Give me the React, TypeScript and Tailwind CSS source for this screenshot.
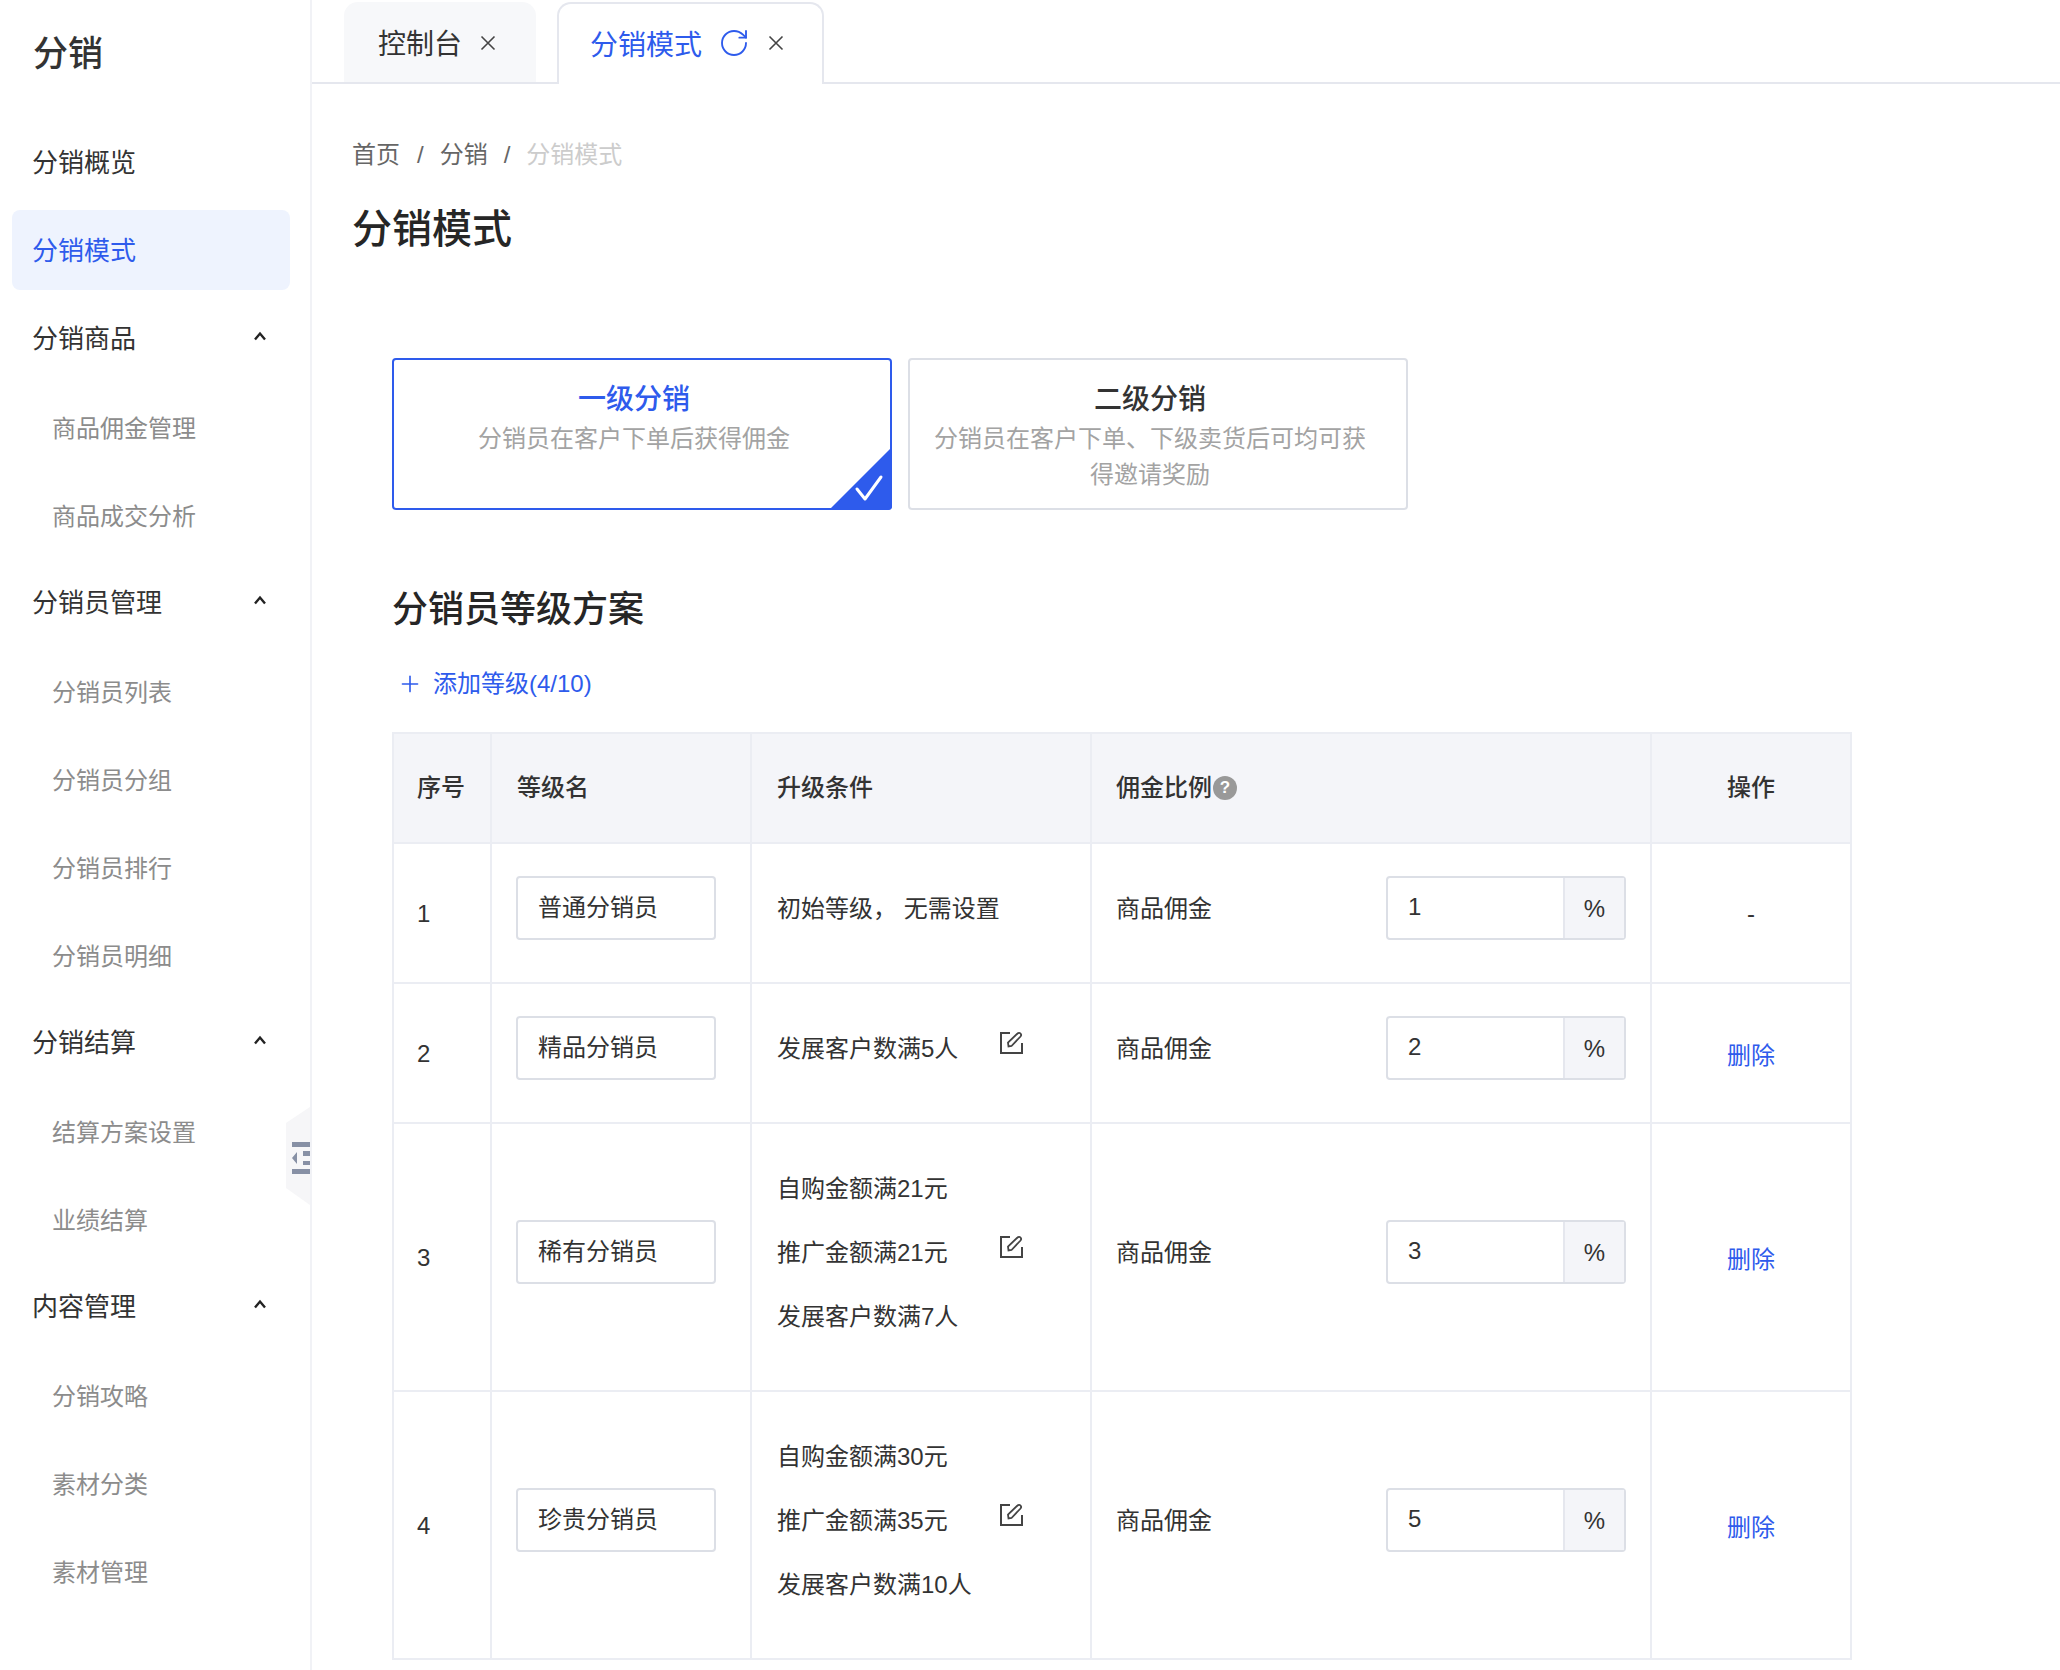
import React from 'react';
import { RotateCw, Plus } from 'lucide-react';

const groups = [
  { title: '分销商品', items: ['商品佣金管理', '商品成交分析'] },
  { title: '分销员管理', items: ['分销员列表', '分销员分组', '分销员排行', '分销员明细'] },
  { title: '分销结算', items: ['结算方案设置', '业绩结算'] },
  { title: '内容管理', items: ['分销攻略', '素材分类', '素材管理'] },
];

const levels = [
  { id: 1, name: '普通分销员', conditions: ['初始等级， 无需设置'], editable: false, rate: '1', height: 'h-[140px]' },
  { id: 2, name: '精品分销员', conditions: ['发展客户数满5人'], editable: true, rate: '2', height: 'h-[140px]' },
  { id: 3, name: '稀有分销员', conditions: ['自购金额满21元', '推广金额满21元', '发展客户数满7人'], editable: true, rate: '3', height: 'h-[268px]' },
  { id: 4, name: '珍贵分销员', conditions: ['自购金额满30元', '推广金额满35元', '发展客户数满10人'], editable: true, rate: '5', height: 'h-[268px]' },
];

const CloseIcon = () => (
  <svg width="16" height="16" viewBox="0 0 16 16" fill="none" stroke="#444" strokeWidth="1.6">
    <path d="M1.5 1.5 14.5 14.5M14.5 1.5 1.5 14.5" />
  </svg>
);

const EditIcon = () => (
  <svg width="24" height="24" viewBox="0 0 24 24" fill="none" stroke="#444" strokeWidth="2">
    <path d="M11 2H2v20h21v-10" />
    <path d="M9.5 15.5 9 11.5 18.5 2.5c1-1 2.2-.9 3 0s.9 2 0 3L12.5 15z" strokeWidth="1.8" />
  </svg>
);

const Chevron = () => (
  <svg width="14" height="10" viewBox="0 0 14 10" fill="none" stroke="#222" strokeWidth="2.4">
    <path d="M2 8.5 7 2.5l5 6" />
  </svg>
);

const Sidebar = () => (
  <aside className="relative w-[312px] shrink-0 border-r-2 border-[#f1f2f6]">
    <div className="h-[122px] pl-[33px] pt-[30px] text-[35px] leading-[48px] font-medium text-[#333]">分销</div>
    <nav className="px-[12px] text-[26px] text-[#333]">
      <div className="mb-[8px] flex h-[80px] items-center pl-[20px] pt-[2px]">分销概览</div>
      <div className="mb-[8px] flex h-[80px] w-[278px] items-center rounded-[8px] bg-[#eef3fe] pl-[20px] pt-[2px] text-[#2e5bec]">分销模式</div>
      {groups.map((group) => (
        <div key={group.title} className="mb-[6px]">
          <div className="flex h-[80px] items-center justify-between pl-[20px] pr-[31px] pt-[2px]">
            <span>{group.title}</span>
            <span className="-mt-[6px]"><Chevron /></span>
          </div>
          <div className="mt-[10px] flex flex-col gap-[8px]">
            {group.items.map((item) => (
              <div key={item} className="flex h-[80px] items-center pl-[40px] pt-[2px] text-[24px] text-[#8c8c8c]">{item}</div>
            ))}
          </div>
        </div>
      ))}
    </nav>
    <svg className="absolute right-[-2px] top-[1107px]" width="26" height="98" viewBox="1 0 26 98">
      <path d="M1 16 25 0v98L1 81z" fill="#f6f6f8" />
      <path d="M7 35h18v5H7zM18 44h7v5h-7zM18 54h7v4h-7zM7 62h18v5H7zM7 51l5-6v12z" fill="#8790a5" />
    </svg>
  </aside>
);

const TabBar = () => (
  <div className="flex h-[84px] items-end border-b-2 border-[#e5e7ee] pl-[32px]">
    <div className="flex h-[80px] w-[192px] items-center rounded-t-[14px] bg-[#f7f8fa] pl-[34px] pt-[2px] text-[28px] text-[#333]">
      <span className="pt-[3px]">控制台</span>
      <span className="ml-[18px]"><CloseIcon /></span>
    </div>
    <div className="-mb-[2px] ml-[21px] flex h-[82px] w-[267px] items-center rounded-t-[14px] border-2 border-b-0 border-[#e5e7ee] bg-white pb-[2px] pl-[31px] text-[28px] text-[#2e5bec]">
      <span className="pt-[5px]">分销模式</span>
      <RotateCw className="ml-[16px]" size={32} strokeWidth={1.4} />
      <span className="ml-[18px]"><CloseIcon /></span>
    </div>
  </div>
);

const ModeCard = ({ title, desc, active }: { title: string; desc: string; active?: boolean }) => (
  <div
    className={`relative h-[152px] w-[500px] rounded-[4px] border-2 pl-[24px] pr-[40px] pt-[21px] text-center ${
      active ? 'border-[#2e5bec]' : 'border-[#dcdfe6]'
    }`}
  >
    <div className={`text-[28px] font-medium leading-[38px] ${active ? 'text-[#2e5bec]' : 'text-[#333]'}`}>{title}</div>
    <div className="mt-[2px] text-[24px] leading-[36px] text-[#a3a3a3]">{desc}</div>
    {active && (
      <svg className="absolute bottom-[-2px] right-[-2px]" width="63" height="63" viewBox="0 0 63 63">
        <path d="M63 0v59a4 4 0 0 1-4 4H0z" fill="#2e5bec" />
        <path d="M28 42l8 10 16-22" fill="none" stroke="#fff" strokeWidth="3" strokeLinecap="round" strokeLinejoin="round" />
      </svg>
    )}
  </div>
);

const cellBase = 'border-2 border-[#ebedf3] align-middle';

const LevelTable = () => (
  <table className="w-[1458px] table-fixed border-collapse text-[24px] text-[#333]">
    <colgroup>
      <col className="w-[98px]" />
      <col className="w-[260px]" />
      <col className="w-[340px]" />
      <col className="w-[560px]" />
      <col className="w-[200px]" />
    </colgroup>
    <thead>
      <tr className="h-[110px] bg-[#f4f5f9] font-medium">
        <th className={`${cellBase} pb-[1px] pl-[23px] text-left font-medium`}>序号</th>
        <th className={`${cellBase} pb-[1px] pl-[25px] text-left font-medium`}>等级名</th>
        <th className={`${cellBase} pb-[1px] pl-[25px] text-left font-medium`}>升级条件</th>
        <th className={`${cellBase} pb-[1px] pl-[24px] text-left font-medium`}>
          <span className="flex items-center">
            佣金比例
            <span className="ml-[1px] flex h-[24px] w-[24px] items-center justify-center rounded-full bg-[#999] text-[17px] font-bold text-white">?</span>
          </span>
        </th>
        <th className={`${cellBase} pb-[1px] text-center font-medium`}>操作</th>
      </tr>
    </thead>
    <tbody>
      {levels.map((level) => (
        <tr key={level.id} className={level.height}>
          <td className={`${cellBase} pl-[23px] pt-[2px]`}>{level.id}</td>
          <td className={`${cellBase} pl-[24px]`}>
            <input
              readOnly
              value={level.name}
              className="mb-[11px] block h-[64px] w-[200px] rounded-[4px] border-2 border-[#dcdfe6] pb-[5px] pl-[20px] outline-none"
            />
          </td>
          <td className={`${cellBase} pl-[25px]`}>
            <div className="mb-[8px] flex items-center">
              <div className="w-[222px] whitespace-nowrap leading-[64px]">
                {level.conditions.map((line) => (
                  <div key={line}>{line}</div>
                ))}
              </div>
              {level.editable && (
                <span className="-mt-[12px]"><EditIcon /></span>
              )}
            </div>
          </td>
          <td className={`${cellBase} pl-[24px] pr-[24px]`}>
            <div className="mb-[11px] flex items-center justify-between">
              <span className="pt-[2px]">商品佣金</span>
              <div className="flex h-[64px] w-[240px] rounded-[4px] border-2 border-[#dcdfe6]">
                <input readOnly value={level.rate} className="w-[175px] min-w-0 pb-[2px] pl-[20px] outline-none" />
                <div className="flex flex-1 items-center justify-center border-l-2 border-[#e5e7ee] bg-[#f4f5f9] pt-[2px]">%</div>
              </div>
            </div>
          </td>
          <td className={`${cellBase} ${level.editable ? 'pt-[6px]' : 'pt-[1px]'} text-center`}>
            {level.editable ? <span className="text-[#2e5bec]">删除</span> : '-'}
          </td>
        </tr>
      ))}
    </tbody>
  </table>
);

export default function App() {
  return (
    <div className="flex h-[1670px] w-[2060px] overflow-hidden bg-white font-['Liberation_Sans','Noto_Sans_CJK_SC',sans-serif]">
      <Sidebar />
      <main className="flex-1">
        <TabBar />
        <div className="pl-[40px] pt-[53px]">
          <div className="flex text-[24px] leading-[36px] text-[#666]">
            <span>首页</span>
            <span className="ml-[17px] mr-[16px]">/</span>
            <span>分销</span>
            <span className="mx-[16px]">/</span>
            <span className="text-[#cccccc]">分销模式</span>
          </div>
          <h1 className="mt-[28px] text-[40px] font-medium leading-[56px] text-[#262626]">分销模式</h1>
        </div>
        <div className="pl-[80px] pt-[101px]">
          <div className="flex gap-[16px]">
            <ModeCard title="一级分销" desc="分销员在客户下单后获得佣金" active />
            <ModeCard title="二级分销" desc="分销员在客户下单、下级卖货后可均可获得邀请奖励" />
          </div>
          <h2 className="mt-[74px] text-[36px] font-medium leading-[52px] text-[#262626]">分销员等级方案</h2>
          <div className="mt-[28px] flex h-[40px] items-center pl-[5px] text-[24px] text-[#2e5bec]">
            <Plus size={26} strokeWidth={1.5} />
            <span className="ml-[10px]">添加等级(4/10)</span>
          </div>
          <div className="mt-[28px]">
            <LevelTable />
          </div>
        </div>
      </main>
    </div>
  );
}
